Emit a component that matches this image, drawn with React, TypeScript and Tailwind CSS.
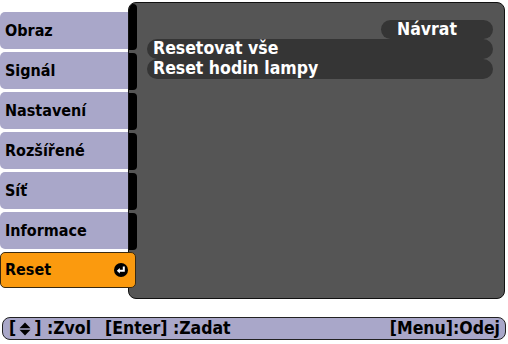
import React from 'react'

const tabs = ['Obraz', 'Signál', 'Nastavení', 'Rozšířené', 'Síť', 'Informace']

function EnterIcon() {
  return (
    <svg width="14" height="14" viewBox="0 0 14 14">
      <circle cx="7" cy="7" r="7" fill="#000" />
      <path d="M9.8 3.4 V7.8 H5" fill="none" stroke="#fff" strokeWidth="2" />
      <path d="M2.8 7.8 L5.8 5 L5.8 10.6 Z" fill="#fff" />
    </svg>
  )
}

function UpDown() {
  return (
    <svg width="12" height="14" viewBox="0 0 12 14" className="mx-[3px]">
      <path d="M6 0.5 L11.5 6.2 H0.5 Z" fill="#000" />
      <path d="M0.5 7.8 H11.5 L6 13.5 Z" fill="#000" />
    </svg>
  )
}

export default function App() {
  return (
    <div className="w-[508px] h-[344px] bg-white overflow-hidden font-['DejaVu_Sans_Condensed','DejaVu_Sans',sans-serif] font-stretch-condensed font-bold leading-none">
      <div className="flex pt-[2px] h-[299px]">
        <div className="w-[128px] flex flex-col gap-[3px] pt-[10px] text-[16px]">
          {tabs.map((t) => (
            <div key={t} className="h-[37px] bg-[#a9a7c9] rounded-l-[5px] flex items-center pl-[5px] text-black">
              {t}
            </div>
          ))}
          <div className="relative z-10 w-[136px] h-[36px] bg-[#fb9a0e] border border-[#3a2a10] rounded-[5px] flex items-center justify-between pl-[4px] pr-[7px] text-black">
            <span>Reset</span>
            <EnterIcon />
          </div>
        </div>
        <div className="flex-1 mr-[3px] bg-[#555555] border border-[#111] rounded-[8px] flex overflow-hidden">
          <div className="w-[8px] flex flex-col gap-[3px] pt-[1px]">
            <div className="h-[46px] bg-black rounded-r-[4px]" />
            {[0, 1, 2, 3, 4].map((i) => (
              <div key={i} className="h-[37px] bg-black rounded-r-[4px]" />
            ))}
          </div>
          <div className="flex-1 flex flex-col pt-[17px] pl-[10px] pr-[11px] text-white text-[17.5px]">
            <div className="flex justify-end">
              <div className="w-[112px] h-[19px] bg-[#353535] rounded-full flex items-center pl-[16px]">Návrat</div>
            </div>
            <div className="h-[20px] bg-[#353535] rounded-full flex items-center pl-[6px]">Resetovat vše</div>
            <div className="h-[20px] bg-[#353535] rounded-full flex items-center pl-[6px]">Reset hodin lampy</div>
          </div>
        </div>
      </div>
      <div className="mt-[18px] mx-[2px] h-[23px] bg-[#a9a7c9] border border-[#222] rounded-[8px] flex items-center justify-between pl-[6px] pr-[5px] text-black text-[17.5px]">
        <div className="flex items-center">
          <span>[</span>
          <UpDown />
          <span>] :Zvol</span>
          <span className="ml-[14px]">[Enter] :Zadat</span>
        </div>
        <span>[Menu]:Odej</span>
      </div>
    </div>
  )
}
